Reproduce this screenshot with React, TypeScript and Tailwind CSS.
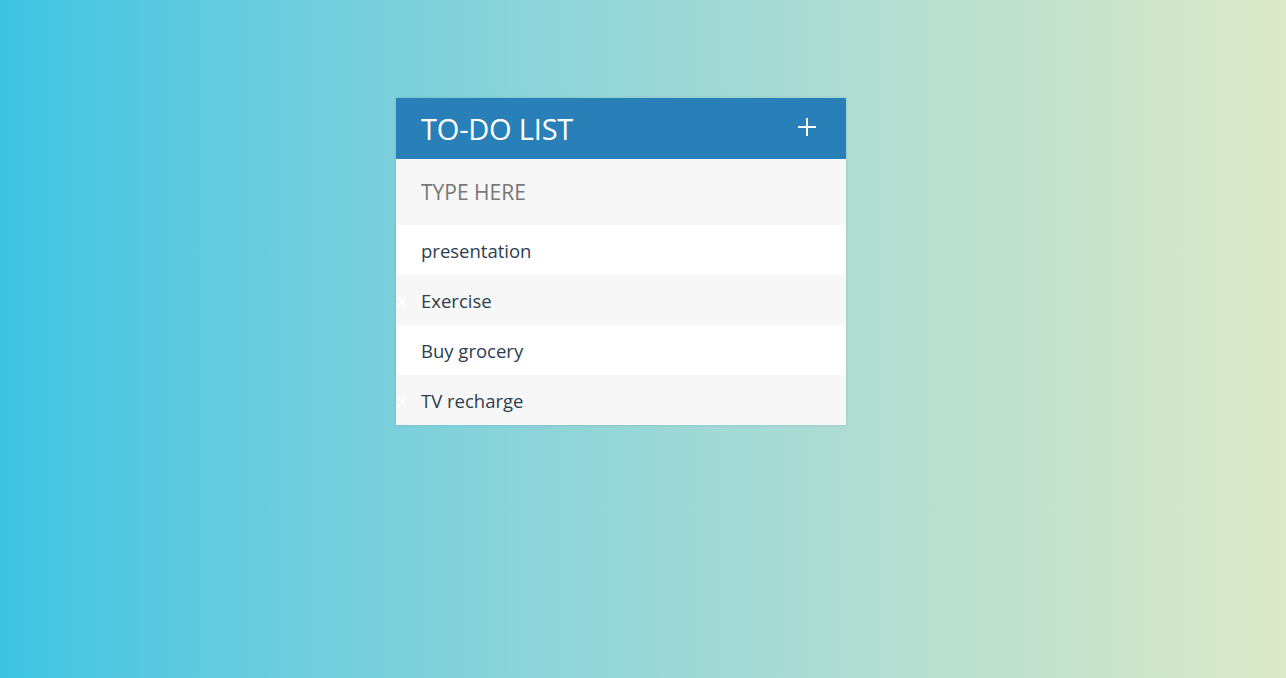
import { useState } from "react";

const initialTodos = ["presentation", "Exercise", "Buy grocery", "TV recharge"];

export default function App() {
  const [todos] = useState(initialTodos);
  const [text, setText] = useState("");

  return (
    <div
      className="min-h-[678px] w-full bg-gradient-to-r from-[#3bc4e2] to-[#dce8c8] pt-[98px]"
      style={{ fontFamily: '"Open Sans", "Noto Sans", sans-serif' }}
    >
      <div className="ml-[calc(50%-247px)] w-[450px] bg-[#f7f7f7] shadow-[0_0_3px_rgba(0,0,0,0.12)]">
        {/* Header */}
        <div className="flex h-[61px] items-center justify-between bg-[#2980b9] pl-[25px] pr-[30px] text-white">
          <h1 className="text-[29px] font-normal leading-none tracking-[-0.2px]">TO-DO LIST</h1>
          <svg width="18" height="18" viewBox="0 0 18 18" className="-mt-[4px]">
            <path d="M9 0v18M0 9h18" stroke="white" strokeWidth="2" />
          </svg>
        </div>

        {/* Input */}
        <input
          value={text}
          onChange={(e) => setText(e.target.value)}
          placeholder="TYPE HERE"
          className="block h-[66px] w-full bg-[#f7f7f7] pl-[25px] text-[21px] text-[#666] outline-none placeholder:text-[#777]"
        />

        {/* List */}
        <ul>
          {todos.map((todo, i) => (
            <li
              key={todo}
              className={`flex h-[50px] items-center text-[18.5px] text-[#2c3e50] ${
                i % 2 === 0 ? "bg-white" : "bg-[#f7f7f7]"
              }`}
            >
              <span className="w-[25px] pl-[1px] text-[18px] leading-none text-white">
                {i % 2 === 1 ? "x" : ""}
              </span>
              <span className="pt-[2px]">{todo}</span>
            </li>
          ))}
        </ul>
      </div>
    </div>
  );
}
